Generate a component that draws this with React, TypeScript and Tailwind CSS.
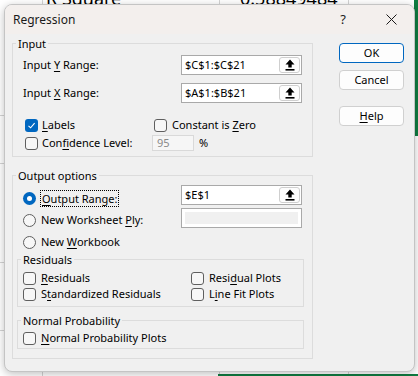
import type { ReactNode } from 'react'

const font = { fontFamily: '"Noto Sans", Roboto, sans-serif' }

function U({ children }: { children: ReactNode }) {
  return <span className="underline underline-offset-[2px] decoration-[1px]">{children}</span>
}

function PickArrow() {
  return (
    <svg width="10" height="12" viewBox="0 0 10 12">
      <polygon points="5,0.5 9.5,5.5 6.7,5.5 6.7,8.5 3.3,8.5 3.3,5.5 0.5,5.5" fill="#000" />
      <rect x="0.5" y="10" width="9" height="1.6" fill="#000" />
    </svg>
  )
}

function RangeBox({ value, disabled }: { value?: string; disabled?: boolean }) {
  if (disabled) {
    return (
      <div className="w-[121px] h-[20px] border border-[#a9a9a9] bg-white p-[3px]">
        <div className="w-full h-full bg-[#f0f0f0]" />
      </div>
    )
  }
  return (
    <div className="w-[121px] h-[20px] border border-[#a9a9a9] bg-white flex items-center justify-between pl-[3px] pr-[1px]">
      <span className="text-[11px] leading-[16px] text-black">{value}</span>
      <div className="w-[21px] h-[16px] border border-[#cfcfcf] rounded-[3px] bg-[#fdfdfd] flex items-center justify-center">
        <PickArrow />
      </div>
    </div>
  )
}

function Check({ checked }: { checked?: boolean }) {
  if (checked) {
    return (
      <div className="w-[13px] h-[13px] rounded-[3px] bg-[#0067c0] flex items-center justify-center shrink-0">
        <svg width="9" height="9" viewBox="0 0 9 9">
          <path d="M1.5 4.8 L3.6 6.8 L7.6 2.2" stroke="#fff" strokeWidth="1.1" fill="none" />
        </svg>
      </div>
    )
  }
  return <div className="w-[13px] h-[13px] rounded-[3px] border border-[#5f5f5f] bg-[#f7f7f7] shrink-0" />
}

function Radio({ checked }: { checked?: boolean }) {
  if (checked) {
    return (
      <div className="w-[13px] h-[13px] rounded-full bg-[#0067c0] flex items-center justify-center shrink-0">
        <div className="w-[5px] h-[5px] rounded-full bg-white" />
      </div>
    )
  }
  return <div className="w-[13px] h-[13px] rounded-full border border-[#5f5f5f] bg-[#f7f7f7] shrink-0" />
}

function Group({ title, className, children }: { title: string; className: string; children: ReactNode }) {
  return (
    <div className={`relative border border-[#dcdcdc] ${className}`}>
      <div className="absolute -top-[6px] left-[3px] px-[2px] bg-[#f0f0f0] text-[11px] leading-[12px] text-black">
        {title}
      </div>
      {children}
    </div>
  )
}

function Button({ children, primary }: { children: ReactNode; primary?: boolean }) {
  return (
    <div
      className={`w-[65px] h-[20px] rounded-[4px] bg-[#fdfdfd] flex items-center justify-center text-[11px] text-black border ${
        primary ? 'border-[#0067c0]' : 'border-[#d0d0d0]'
      }`}
    >
      {children}
    </div>
  )
}

export default function App() {
  return (
    <div className="relative w-[418px] h-[376px] overflow-hidden bg-white" style={font}>
      {/* sheet behind the dialog */}
      <div className="absolute left-[42px] top-0 w-px h-full bg-[#d4d4d4]" />
      <div className="absolute left-[219px] top-0 w-px h-full bg-[#d4d4d4]" />
      <div className="absolute left-[348px] top-0 w-px h-full bg-[#d4d4d4]" />
      <div className="absolute left-[46px] -top-[15px] text-[18px] text-black">R Square</div>
      <div className="absolute left-[240px] -top-[15px] text-[18px] text-black">0.58849484</div>
      <div className="absolute left-0 top-[115px] w-[4px] h-px bg-[#d4d4d4]" />
      <div className="absolute left-0 top-[163px] w-[4px] h-px bg-[#d4d4d4]" />
      <div className="absolute left-0 top-[262px] w-[4px] h-px bg-[#d4d4d4]" />
      <div className="absolute left-0 top-[330px] w-[4px] h-px bg-[#d4d4d4]" />
      <div className="absolute left-[414px] top-0 w-[4px] h-[136px] bg-[#107c41]" />
      <div className="absolute left-[218px] top-[374px] w-[200px] h-[2px] bg-[#107c41]" />

      {/* dialog window */}
      <div className="absolute left-[4px] top-[4px] w-[411px] h-[368px] rounded-[8px] border border-[#c4c4c4] bg-[#f0f0f0] overflow-hidden shadow-[0_2px_8px_rgba(0,0,0,0.25)] flex flex-col">
        <div className="h-[29px] bg-[#f3efed] flex items-center pl-[8px] text-[12px] text-[#1a1a1a] shrink-0">
          <span>Regression</span>
          <span className="ml-auto mr-[40px] text-[13px]">?</span>
          <svg width="11" height="11" viewBox="0 0 11 11" className="mr-[17px]">
            <path d="M0.5 0.5 L10.5 10.5 M10.5 0.5 L0.5 10.5" stroke="#1a1a1a" strokeWidth="1" />
          </svg>
        </div>

        <div className="flex pt-[9px] pl-[7px]">
          {/* left column */}
          <div className="w-[301px] flex flex-col text-[11px] leading-[16px] text-black">
            <Group title="Input" className="h-[114px] pt-[11px] pl-[10px]">
              <div className="flex items-center h-[20px]">
                <span className="w-[158px]">Input <U>Y</U> Range:</span>
                <RangeBox value="$C$1:$C$21" />
              </div>
              <div className="flex items-center h-[20px] mt-[8px]">
                <span className="w-[158px]">Input <U>X</U> Range:</span>
                <RangeBox value="$A$1:$B$21" />
              </div>
              <div className="flex items-center h-[16px] mt-[14px]">
                <div className="w-[131px] flex items-center gap-[4px] pl-[2px]">
                  <Check checked />
                  <span><U>L</U>abels</span>
                </div>
                <div className="flex items-center gap-[5px]">
                  <Check />
                  <span>Constant is <U>Z</U>ero</span>
                </div>
              </div>
              <div className="flex items-center h-[16px] mt-[2px]">
                <div className="w-[129px] flex items-center gap-[4px] pl-[2px]">
                  <Check />
                  <span>Con<U>f</U>idence Level:</span>
                </div>
                <div className="w-[42px] h-[16px] border border-[#d9d9d9] bg-[#f6f6f6] pl-[4px] text-[#8a8a8a] flex items-center">
                  95
                </div>
                <span className="ml-[5px]">%</span>
              </div>
            </Group>

            <Group title="Output options" className="h-[184px] mt-[18px] pt-[9px]">
              <div className="flex items-start pl-[10px]">
                <div className="w-[158px] flex flex-col mt-[2px]">
                  <div className="h-[22px] flex items-center gap-[4px]">
                    <Radio checked />
                    <span className="border border-dotted border-black px-[1px] leading-[15px]">
                      <U>O</U>utput Range:
                    </span>
                  </div>
                  <div className="h-[22px] flex items-center gap-[5px]">
                    <Radio />
                    <span>New Worksheet <U>P</U>ly:</span>
                  </div>
                  <div className="h-[22px] flex items-center gap-[5px]">
                    <Radio />
                    <span>New <U>W</U>orkbook</span>
                  </div>
                </div>
                <div className="flex flex-col gap-[3px]">
                  <RangeBox value="$E$1" />
                  <RangeBox disabled />
                </div>
              </div>

              <Group title="Residuals" className="ml-[4px] w-[287px] h-[48px] mt-[6px] pt-[10px] pl-[5px]">
                <div className="flex items-center h-[16px]">
                  <div className="w-[168px] flex items-center gap-[5px]">
                    <Check />
                    <span><U>R</U>esiduals</span>
                  </div>
                  <div className="flex items-center gap-[5px]">
                    <Check />
                    <span>Resi<U>d</U>ual Plots</span>
                  </div>
                </div>
                <div className="flex items-center h-[16px]">
                  <div className="w-[168px] flex items-center gap-[5px]">
                    <Check />
                    <span>S<U>t</U>andardized Residuals</span>
                  </div>
                  <div className="flex items-center gap-[5px]">
                    <Check />
                    <span>L<U>i</U>ne Fit Plots</span>
                  </div>
                </div>
              </Group>

              <Group title="Normal Probability" className="ml-[4px] w-[287px] h-[29px] mt-[13px] pt-[9px] pl-[5px]">
                <div className="flex items-center h-[16px] gap-[5px]">
                  <Check />
                  <span><U>N</U>ormal Probability Plots</span>
                </div>
              </Group>
            </Group>
          </div>

          {/* buttons */}
          <div className="ml-[26px] flex flex-col">
            <Button primary>OK</Button>
            <div className="mt-[7px]">
              <Button>Cancel</Button>
            </div>
            <div className="mt-[16px]">
              <Button><U>H</U>elp</Button>
            </div>
          </div>
        </div>
      </div>
    </div>
  )
}
